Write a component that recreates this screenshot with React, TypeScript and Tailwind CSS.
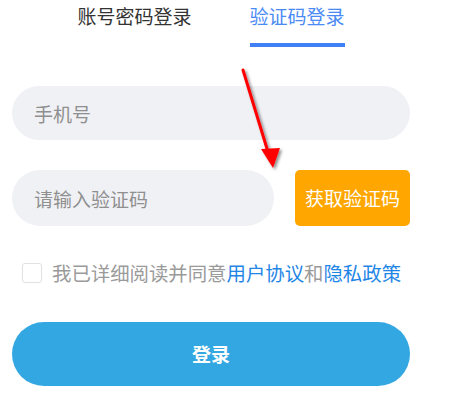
import React, { useState } from 'react';

export default function App() {
  const [tab, setTab] = useState(1);
  const [agreed, setAgreed] = useState(false);

  return (
    <div
      className="relative w-[460px] h-[419px] bg-white overflow-hidden"
      style={{ fontFamily: '"Noto Sans CJK SC", "Noto Sans", sans-serif' }}
    >
      <div className="ml-3 w-[398px]">
        {/* Tabs */}
        <div className="flex justify-center gap-[58px] pt-[2px]">
          <button
            onClick={() => setTab(0)}
            className={`flex flex-col items-center text-[19px] leading-[28px] ${tab === 0 ? 'text-[#4a8af4]' : 'text-[#333333]'}`}
          >
            账号密码登录
            <span className={`mt-[13px] h-[4px] w-full ${tab === 0 ? 'bg-[#3f80f5]' : 'bg-transparent'}`} />
          </button>
          <button
            onClick={() => setTab(1)}
            className={`flex flex-col items-center text-[19px] leading-[28px] ${tab === 1 ? 'text-[#4a8af4]' : 'text-[#333333]'}`}
          >
            验证码登录
            <span className={`mt-[13px] h-[4px] w-full ${tab === 1 ? 'bg-[#3f80f5]' : 'bg-transparent'}`} />
          </button>
        </div>

        {/* Phone */}
        <input
          placeholder="手机号"
          className="mt-[39px] block h-[54px] w-full rounded-full bg-[#f0f1f5] px-[22px] text-[19px] text-[#333] placeholder:text-[#8f8f8f] outline-none"
        />

        {/* Code */}
        <div className="mt-[30px] flex items-center gap-[21px]">
          <input
            placeholder="请输入验证码"
            className="block h-[56px] w-[262px] rounded-full bg-[#f0f1f5] px-[22px] text-[19px] text-[#333] placeholder:text-[#8f8f8f] outline-none"
          />
          <button className="h-[56px] flex-1 rounded-[5px] bg-[#ffa600] text-[19px] text-white">
            获取验证码
          </button>
        </div>

        {/* Agreement */}
        <div className="mt-[34px] flex items-center pl-[10px]">
          <button
            onClick={() => setAgreed(!agreed)}
            className="h-[20px] w-[20px] rounded-[3px] border border-[#e2e2e2] bg-white"
          >
            {agreed && <span className="block text-[13px] leading-[18px] text-[#33a7e1]">✓</span>}
          </button>
          <p className="ml-[10px] text-[19.4px] leading-[26px] text-[#9a9a9a]">
            我已详细阅读并同意<span className="text-[#1f86e6]">用户协议</span>和
            <span className="text-[#1f86e6]">隐私政策</span>
          </p>
        </div>

        {/* Login */}
        <button className="mt-[36px] h-[64px] w-full rounded-full bg-[#33a7e1] text-[19px] font-bold text-white">
          登录
        </button>
      </div>

      {/* Annotation arrow */}
      <svg className="absolute left-0 top-0 pointer-events-none" width="460" height="419">
        <defs>
          <filter id="sh" x="-50%" y="-50%" width="200%" height="200%">
            <feDropShadow dx="2" dy="2" stdDeviation="1.5" floodColor="#000" floodOpacity="0.45" />
          </filter>
        </defs>
        <g filter="url(#sh)">
          <line x1="243" y1="70" x2="268" y2="152" stroke="#ff0000" strokeWidth="3" strokeLinecap="round" />
          <polygon points="273,168 261,149 280,148" fill="#ff0000" />
        </g>
      </svg>
    </div>
  );
}
